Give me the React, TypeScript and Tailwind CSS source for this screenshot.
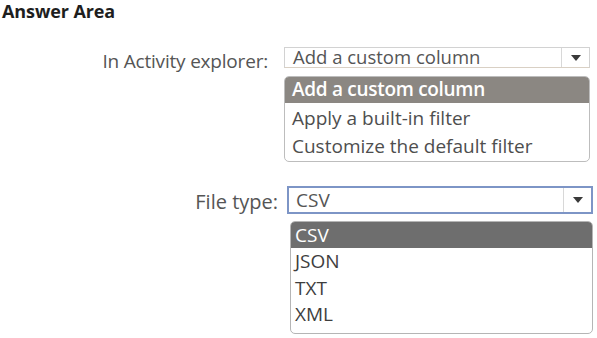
import React from "react";

function Arrow() {
  return (
    <svg width="10" height="6" viewBox="0 0 10 6">
      <path d="M0 0 L10 0 L5 6 Z" fill="#3a3a3a" />
    </svg>
  );
}

export default function App() {
  return (
    <div className="w-[597px] h-[338px] bg-white overflow-hidden font-['Open_Sans',sans-serif] text-[#4a4a4a]">
      <div className="pl-[2px] text-[18px] leading-[22px] font-bold text-[#1e1e1e] tracking-[-0.1px]">Answer Area</div>

      <div className="flex mt-[25px]">
        <div className="w-[268px] text-right text-[19px] leading-[22px] pt-[3px] text-[#555] tracking-[-0.2px] whitespace-nowrap">In Activity explorer:</div>
        <div className="ml-[16px] w-[306px] flex flex-col">
          <div className="h-[21px] border border-[#d2d2d2] border-b-[#d9d0c4] flex items-stretch bg-white">
            <div className="flex-1 pl-[8px] text-[18.5px] leading-[18px] text-[#555] whitespace-nowrap">Add a custom column</div>
            <div className="w-[28px] border-l border-[#d8d8d8] flex items-center justify-center">
              <Arrow />
            </div>
          </div>
          <div className="mt-[8px] h-[86px] border border-[#bdbdbd] rounded-[5px] overflow-hidden text-[19px] text-[#4e4e4e]">
            <div className="h-[26px] bg-[#8b8782] text-white font-semibold pl-[7px] leading-[25px] whitespace-nowrap tracking-[-0.3px]">Add a custom column</div>
            <div className="h-[29px] pl-[7px] leading-[31px] whitespace-nowrap">Apply a built-in filter</div>
            <div className="h-[29px] pl-[7px] leading-[29px] whitespace-nowrap">Customize the default filter</div>
          </div>
        </div>
      </div>

      <div className="flex mt-[24px]">
        <div className="w-[278px] text-right text-[20px] leading-[22px] pt-[5px] text-[#555]">File type:</div>
        <div className="ml-[9px] w-[306px] flex flex-col">
          <div className="h-[28px] border-2 border-[#7d95c6] flex items-stretch bg-white">
            <div className="flex-1 pl-[7px] text-[19px] leading-[25px] text-[#555]">CSV</div>
            <div className="w-[28px] border-l border-[#d8d8d8] flex items-center justify-center">
              <Arrow />
            </div>
          </div>
          <div className="mt-[7px] ml-[3px] h-[113px] border border-[#b5b5b5] rounded-[5px] overflow-hidden text-[19px] text-[#3e3e3e]">
            <div className="h-[26px] bg-[#6e6e6e] text-white pl-[4px] leading-[26px]">CSV</div>
            <div className="h-[27px] pl-[4px] leading-[27px]">JSON</div>
            <div className="h-[26px] pl-[4px] leading-[26px]">TXT</div>
            <div className="h-[27px] pl-[4px] leading-[27px]">XML</div>
          </div>
        </div>
      </div>
    </div>
  );
}
